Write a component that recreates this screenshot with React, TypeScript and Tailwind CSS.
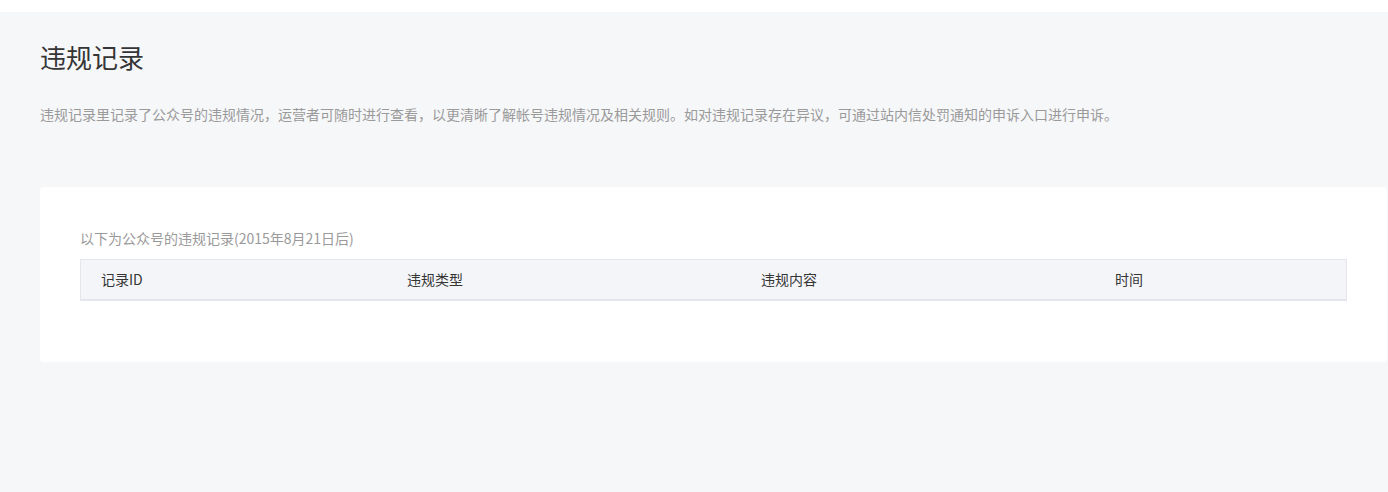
export default function App() {
  return (
    <div
      className="w-[1388px] h-[492px] bg-white pt-[12px]"
      style={{ fontFamily: '"Noto Sans CJK SC", "Noto Sans", sans-serif' }}
    >
      <div className="h-[480px] bg-[#f6f7f9] pl-[40px] pr-[1px] pt-[27px]">
        <h1 className="text-[26px] leading-[36px] text-[#353535] font-normal">违规记录</h1>
        <p className="mt-[29px] text-[14px] leading-[20px] text-[#9a9a9a]">
          违规记录里记录了公众号的违规情况，运营者可随时进行查看，以更清晰了解帐号违规情况及相关规则。如对违规记录存在异议，可通过站内信处罚通知的申诉入口进行申诉。
        </p>
        <div className="mt-[63px] bg-white rounded-[3px] px-[40px] pt-[41px] pb-[61px]">
          <div className="text-[14px] leading-[20px] text-[#9a9a9a]">以下为公众号的违规记录(2015年8月21日后)</div>
          <div className="mt-[11px] bg-[#f4f5f9] border border-[#e4e6eb] border-b-2 grid grid-cols-[306px_354px_354px_1fr] h-[42px] items-center text-[14px] text-[#353535]">
            <div className="pl-[20px]">记录ID</div>
            <div className="pl-[20px]">违规类型</div>
            <div className="pl-[20px]">违规内容</div>
            <div className="pl-[20px]">时间</div>
          </div>
        </div>
      </div>
    </div>
  );
}
